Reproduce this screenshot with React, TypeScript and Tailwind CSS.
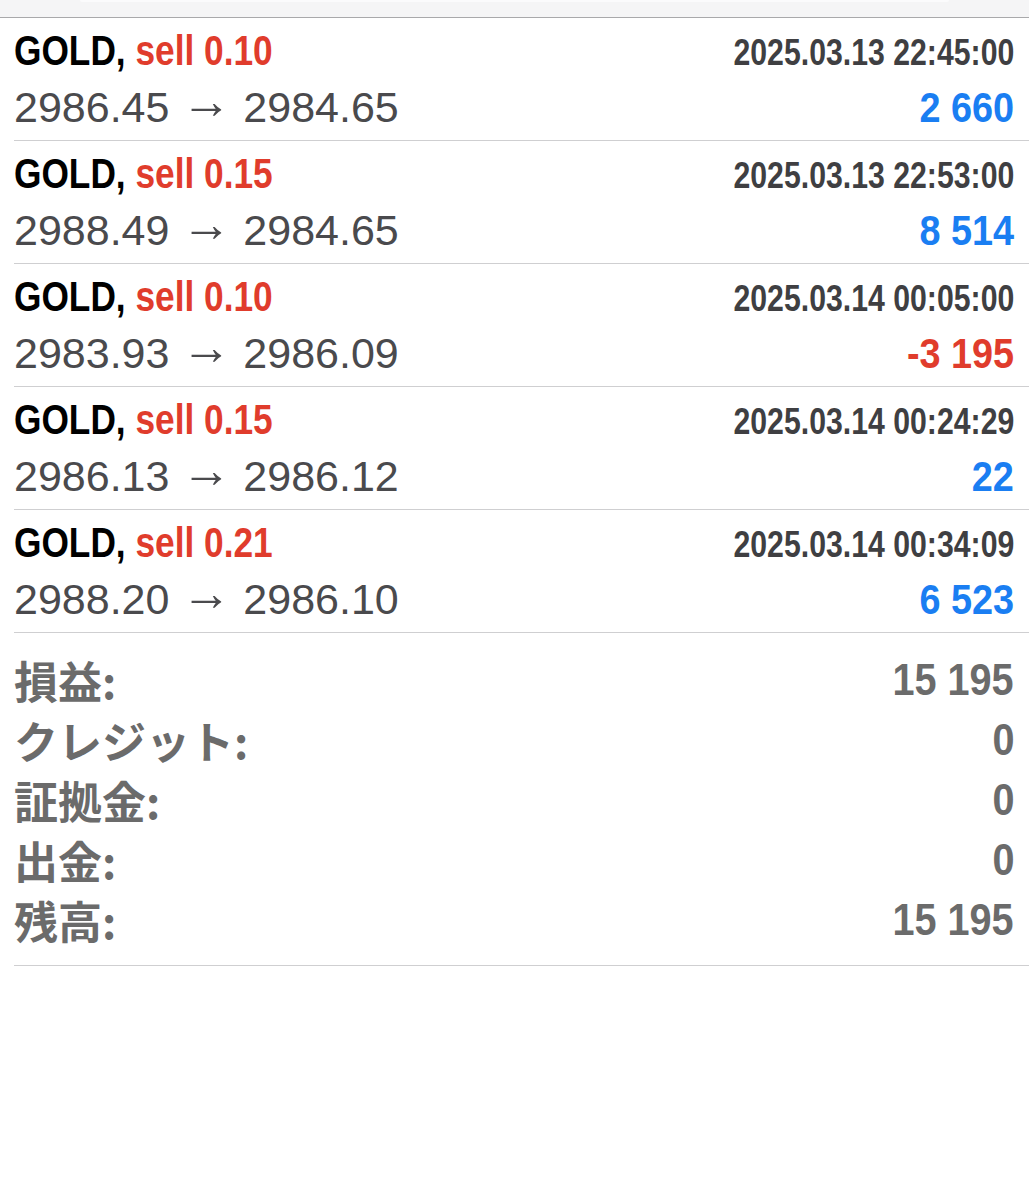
import React from "react";

type Trade = {
  symbol: string;
  side: string;
  time: string;
  open: string;
  close: string;
  profit: string;
  loss?: boolean;
};

const trades: Trade[] = [
  { symbol: "GOLD", side: "sell 0.10", time: "2025.03.13 22:45:00", open: "2986.45", close: "2984.65", profit: "2 660" },
  { symbol: "GOLD", side: "sell 0.15", time: "2025.03.13 22:53:00", open: "2988.49", close: "2984.65", profit: "8 514" },
  { symbol: "GOLD", side: "sell 0.10", time: "2025.03.14 00:05:00", open: "2983.93", close: "2986.09", profit: "-3 195", loss: true },
  { symbol: "GOLD", side: "sell 0.15", time: "2025.03.14 00:24:29", open: "2986.13", close: "2986.12", profit: "22" },
  { symbol: "GOLD", side: "sell 0.21", time: "2025.03.14 00:34:09", open: "2988.20", close: "2986.10", profit: "6 523" },
];

const summary = [
  { label: "損益:", value: "15 195" },
  { label: "クレジット:", value: "0" },
  { label: "証拠金:", value: "0" },
  { label: "出金:", value: "0" },
  { label: "残高:", value: "15 195" },
];

// no condensed face installed, so squeeze the bold text horizontally
const bold = "font-['Liberation_Sans',Arial,sans-serif] font-bold";

function TradeRow({ t }: { t: Trade }) {
  return (
    <div className="flex flex-col gap-[14px] border-b border-[#cfcfd1] pb-[11px] pr-[15px] pt-[11px]">
      <div className="flex h-[43px] items-baseline justify-between leading-none">
        <span className={`${bold} inline-block origin-left scale-x-[0.82] whitespace-nowrap text-[43px] text-black`}>
          {t.symbol}, <span className="text-[#e03c2c]">{t.side}</span>
        </span>
        <span className={`${bold} inline-block origin-right scale-x-[0.84] whitespace-nowrap text-[36px] text-[#3f3f42]`}>
          {t.time}
        </span>
      </div>
      <div className="flex h-[43px] items-baseline justify-between leading-none">
        <span className="whitespace-nowrap font-['Liberation_Sans',Arial,sans-serif] text-[43px] text-[#4a4a4d]">
          {t.open}{" "}
          <span className="inline-block -translate-y-[4px] text-[50px] leading-[20px]">→</span> {t.close}
        </span>
        <span
          className={`${bold} inline-block origin-right scale-x-[0.9] whitespace-nowrap text-[42px] ${
            t.loss ? "text-[#e03c2c]" : "text-[#1a7ef2]"
          }`}
        >
          {t.profit}
        </span>
      </div>
    </div>
  );
}

export default function App() {
  return (
    <div className="min-h-[1200px] w-full bg-white">
      <div className="h-[18px] border-b border-[#a9a9ab] bg-[#f5f5f6] px-[80px]">
        <div className="h-[2px] rounded-b-md bg-[#fbfbfc]" />
      </div>
      <div className="pl-[14px]">
        {trades.map((t, i) => (
          <TradeRow key={i} t={t} />
        ))}
        <div className="border-b border-[#cfcfd1] pb-[15px] pr-[15px] pt-[17px]">
          {summary.map((s) => (
            <div key={s.label} className="flex h-[60px] items-center justify-between text-[#6b6b6b]">
              <span className="font-['Noto_Sans_CJK_JP',sans-serif] text-[44px] font-bold leading-none">
                {s.label}
              </span>
              <span className={`${bold} inline-block origin-right scale-x-[0.9] text-[44px] leading-none`}>
                {s.value}
              </span>
            </div>
          ))}
        </div>
      </div>
    </div>
  );
}
